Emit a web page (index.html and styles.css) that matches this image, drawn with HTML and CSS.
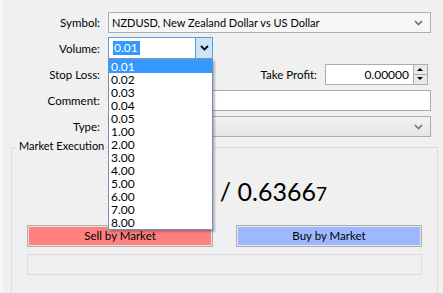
FILE: index.html
```html
<!DOCTYPE html>
<html lang="en">
<head>
<meta charset="UTF-8" />
<title>Order</title>
<link rel="stylesheet" href="styles.css">
</head>
<body>
<div id="window">
  <div id="form">
    <div class="row">
      <label class="lbl">Symbol:</label>
      <div class="select wide">
        <span>NZDUSD, New Zealand Dollar vs US Dollar</span>
        <svg class="chev" width="9" height="6" viewBox="0 0 9 6"><path d="M1 1 L4.5 4.5 L8 1" fill="none" stroke="#707070" stroke-width="1.6"/></svg>
      </div>
    </div>
    <div class="row row-volume">
      <label class="lbl">Volume:</label>
      <div class="combo">
        <div class="combo-edit"><span class="sel">0.01</span></div>
        <div class="combo-btn">
          <svg width="9" height="6" viewBox="0 0 9 6"><path d="M1 1 L4.5 4.5 L8 1" fill="none" stroke="#000" stroke-width="1.8"/></svg>
        </div>
      </div>
    </div>
    <div class="row">
      <label class="lbl">Stop Loss:</label>
      <div class="spin short">
        <div class="spin-edit"></div>
        <div class="spin-btns"><span class="up"></span><span class="down"></span></div>
      </div>
      <label class="lbl-tp">Take Profit:</label>
      <div class="spin tp">
        <div class="spin-edit">0.00000</div>
        <div class="spin-btns"><span class="up"></span><span class="down"></span></div>
      </div>
    </div>
    <div class="row">
      <label class="lbl">Comment:</label>
      <div class="edit wide"></div>
    </div>
    <div class="row">
      <label class="lbl">Type:</label>
      <div class="select wide grad">
        <span></span>
        <svg class="chev" width="9" height="6" viewBox="0 0 9 6"><path d="M1 1 L4.5 4.5 L8 1" fill="none" stroke="#707070" stroke-width="1.6"/></svg>
      </div>
    </div>
  </div>

  <div id="group">
    <span class="group-title">Market Execution</span>
    <div class="price">0.6365<small>3</small> / 0.6366<small>7</small></div>
    <div class="buttons">
      <div class="btn sell">Sell by Market</div>
      <div class="btn buy">Buy by Market</div>
    </div>
    <div class="status-box"></div>
  </div>

  <div id="droplist">
    <div class="item active">0.01</div>
    <div class="item">0.02</div>
    <div class="item">0.03</div>
    <div class="item">0.04</div>
    <div class="item">0.05</div>
    <div class="item">1.00</div>
    <div class="item">2.00</div>
    <div class="item">3.00</div>
    <div class="item">4.00</div>
    <div class="item">5.00</div>
    <div class="item">6.00</div>
    <div class="item">7.00</div>
    <div class="item">8.00</div>
  </div>
</div>
</body>
</html>
```
FILE: styles.css
```css
html, body {
  margin: 0;
  padding: 0;
  background: #f0f0f0;
  font-family: 'Lato', 'Noto Sans', Arial, sans-serif;
  font-size: 11.5px;
  color: #000;
}
#window {
  position: relative;
  width: 443px;
  height: 293px;
  box-sizing: border-box;
  border-left: 3px solid #f6f6f6;
  overflow: hidden;
}
#form {
  padding-top: 12px;
}
.row {
  display: flex;
  align-items: center;
  height: 21px;
  margin-bottom: 5px;
}
.row-volume {
  height: 22px;
  margin-top: -1px;
}
.lbl {
  width: 105px;
  text-align: right;
  padding-right: 8px;
  box-sizing: border-box;
  flex: none;
}
.wide {
  width: 323px;
}
.select, .edit {
  height: 21px;
  box-sizing: border-box;
  border: 1px solid #adadad;
  display: flex;
  align-items: center;
  padding: 0 6px 0 3px;
  justify-content: space-between;
}
.select {
  background: #f6f6f6;
}
.select span {
  font-size: 11px;
}
.select.grad {
  background: linear-gradient(#f2f2f2, #e6e6e6);
}
.edit {
  background: #fff;
}
.chev {
  margin-right: 1px;
}
/* volume combo, focused */
.combo {
  width: 105px;
  height: 22px;
  box-sizing: border-box;
  border: 1px solid #569de5;
  background: #fff;
  display: flex;
}
.combo-edit {
  flex: 1;
  display: flex;
  align-items: center;
  padding-left: 4px;
}
.sel {
  background: #3399ff;
  color: #fff;
  font-size: 12px;
  line-height: 14px;
  padding: 0 2px 0 1px;
}
.combo-btn {
  width: 16px;
  background: #cce4f7;
  border-left: 1px solid #569de5;
  display: flex;
  align-items: center;
  justify-content: center;
}
/* spin inputs */
.spin {
  height: 21px;
  box-sizing: border-box;
  border: 1px solid #adadad;
  background: #fff;
  display: flex;
}
.spin.short {
  width: 105px;
}
.spin.tp {
  width: 103px;
}
.spin-edit {
  flex: 1;
  text-align: right;
  padding-right: 4px;
  line-height: 19px;
  font-size: 12px;
}
.spin-btns {
  width: 13px;
  display: flex;
  flex-direction: column;
  border-left: 1px solid #adadad;
}
.spin-btns span {
  flex: 1;
  background: #e9e9e9;
  position: relative;
}
.spin-btns .up {
  border-bottom: 1px solid #adadad;
}
.spin-btns span::after {
  content: "";
  position: absolute;
  left: 3px;
  top: 3px;
  border-left: 3px solid transparent;
  border-right: 3px solid transparent;
}
.spin-btns .up::after {
  border-bottom: 3px solid #000;
}
.spin-btns .down::after {
  border-top: 3px solid #000;
  top: 2px;
}
.lbl-tp {
  width: 112px;
  text-align: right;
  padding-right: 8px;
  box-sizing: border-box;
}
/* group box */
#group {
  margin: 10px 5px 0 8px;
  border: 1px solid #dcdcdc;
  height: 160px;
  padding: 0 15px 0 15px;
}
.group-title {
  display: inline-block;
  margin: -9px 0 0 -11px;
  padding: 0 2px 0 3px;
  background: #f0f0f0;
  vertical-align: top;
  font-size: 11px;
}
.price {
  text-align: center;
  font-size: 25px;
  line-height: 30px;
  margin-top: 15px;
  padding-left: 2px;
}
.price small {
  font-size: 19px;
}
.buttons {
  display: flex;
  justify-content: space-between;
  margin-top: 16px;
}
.btn {
  width: 186px;
  height: 22px;
  box-sizing: border-box;
  border: 1px solid #adadad;
  box-shadow: inset 0 0 0 1px #e6e6e6;
  text-align: center;
  line-height: 20px;
}
.sell {
  background: #ff8080;
}
.buy {
  background: #9db8ff;
}
.status-box {
  margin-top: 7px;
  height: 21px;
  box-sizing: border-box;
  border: 1px solid #dcdcdc;
}
/* open dropdown */
#droplist {
  position: absolute;
  left: 105px;
  top: 59px;
  width: 105px;
  box-sizing: border-box;
  border: 1px solid #6f8fbf;
  background: #fff;
  box-shadow: 2px 2px 2px rgba(0,0,0,0.25);
}
.item {
  height: 13px;
  line-height: 13px;
  padding-left: 2px;
  font-size: 12px;
}
.item.active {
  background: #3399ff;
  color: #fff;
}
```
